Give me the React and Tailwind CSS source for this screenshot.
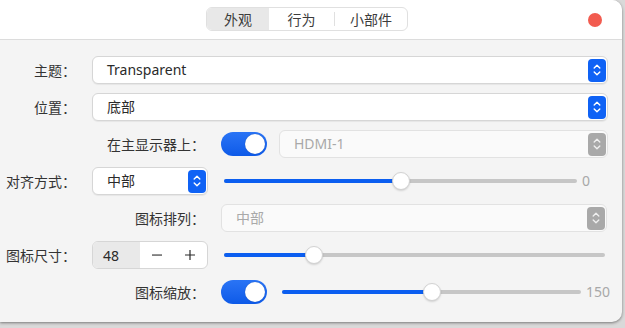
import React from 'react';

const FONT = { fontFamily: '"Noto Sans", "Noto Sans CJK SC", sans-serif' };

function Chevrons({ className }) {
  return (
    <svg width="10" height="16" viewBox="0 0 10 16" className={className} fill="none" stroke="currentColor" strokeWidth="1.4" strokeLinecap="round" strokeLinejoin="round">
      <path d="M2.2 6 L5 3.2 L7.8 6" />
      <path d="M2.2 10 L5 12.8 L7.8 10" />
    </svg>
  );
}

function Combo({ text, width, disabled }) {
  return (
    <div
      className={`h-[28px] flex items-center rounded-[6px] border ${
        disabled ? 'bg-[#fafafa] border-[#e2e2e2] text-[#a9a9a9]' : 'bg-white border-[#d6d6d6] text-[#2a2a2a] shadow-[0_1px_1px_rgba(0,0,0,0.06)]'
      } ${width}`}
    >
      <span className="pl-[14px] text-[14px] leading-none flex-1">{text}</span>
      <div
        className={`w-[18px] h-[23px] mr-[1px] rounded-[4px] flex items-center justify-center ${
          disabled ? 'bg-[#a9a9a9] text-[#eeeeee]' : 'bg-[#0f62f5] text-white'
        }`}
      >
        <Chevrons />
      </div>
    </div>
  );
}

function Toggle() {
  return (
    <div className="w-[46px] h-[24px] rounded-full bg-gradient-to-b from-[#2a74f5] to-[#0d5ae8] flex items-center justify-end pr-[2px]">
      <div className="w-[20px] h-[20px] rounded-full bg-white shadow-[0_0_1px_rgba(0,0,0,0.3)]" />
    </div>
  );
}

function Slider({ width, fraction, value }) {
  const pos = Math.round(width * fraction);
  return (
    <div className="flex items-center">
      <div className="relative h-[18px] flex items-center" style={{ width }}>
        <div className="absolute left-0 right-0 h-[4px] rounded-full bg-[#c6c6c6]" />
        <div className="absolute left-0 h-[4px] rounded-full bg-[#0b5ef0]" style={{ width: pos }} />
        <div
          className="absolute w-[18px] h-[18px] rounded-full bg-white border border-[#d2d2d2] shadow-[0_1px_2px_rgba(0,0,0,0.15)]"
          style={{ left: pos - 9 }}
        />
      </div>
      {value !== undefined && <span className="ml-[5px] text-[14px] text-[#a8a8a8] leading-none">{value}</span>}
    </div>
  );
}

function Row({ labelWidth, label, children }) {
  return (
    <div className="h-[28px] flex items-center">
      <div className="text-right text-[14px] text-[#333333] shrink-0" style={{ width: labelWidth }}>
        {label}
      </div>
      <div className="ml-[16px] flex items-center">{children}</div>
    </div>
  );
}

export default function App() {
  return (
    <div className="w-[625px] h-[328px] bg-[#d9d9d9] overflow-hidden" style={FONT}>
      <div className="w-[622px] h-[322px] bg-[#f4f4f4] rounded-tr-[10px] rounded-br-[10px] shadow-[0_1px_3px_rgba(0,0,0,0.45)] overflow-hidden flex flex-col">
        <div className="h-[40px] bg-white border-b border-[#dcdcdc] flex items-center shrink-0">
          <div className="ml-[206px] mt-[-1px] h-[24px] flex items-center rounded-[6px] border border-[#e0e0e0] bg-white text-[14px] text-[#3c3c3c]">
            <div className="w-[62px] h-full rounded-l-[5px] bg-[#e8e8e8] flex items-center justify-center">外观</div>
            <div className="w-[65px] h-full flex items-center justify-center">行为</div>
            <div className="w-[1px] h-[14px] bg-[#e0e0e0]" />
            <div className="w-[72px] h-full flex items-center justify-center">小部件</div>
          </div>
          <div className="ml-auto mr-[20px] w-[14px] h-[14px] rounded-full bg-[#f25b4f]" />
        </div>

        <div className="pt-[16px] flex flex-col gap-[9px] pr-[14px]">
          <Row labelWidth={76} label="主题：">
            <Combo text="Transparent" width="w-[516px]" />
          </Row>
          <Row labelWidth={76} label="位置：">
            <Combo text="底部" width="w-[516px]" />
          </Row>
          <Row labelWidth={205} label="在主显示器上：">
            <Toggle />
            <div className="ml-[12px]">
              <Combo text="HDMI-1" width="w-[329px]" disabled />
            </div>
          </Row>
          <Row labelWidth={76} label="对齐方式：">
            <Combo text="中部" width="w-[116px]" />
            <div className="ml-[16px]">
              <Slider width={353} fraction={0.5} value="0" />
            </div>
          </Row>
          <Row labelWidth={205} label="图标排列：">
            <Combo text="中部" width="w-[386px]" disabled />
          </Row>
          <Row labelWidth={76} label="图标尺寸：">
            <div className="w-[116px] h-[28px] flex rounded-[6px] border border-[#d6d6d6] overflow-hidden bg-white">
              <div className="w-[47px] bg-[#e9e9e9] flex items-center pl-[10px] text-[14px] text-[#2a2a2a]">48</div>
              <div className="flex-1 flex items-center justify-around text-[#2a2a2a]">
                <svg width="12" height="12" viewBox="0 0 12 12" stroke="currentColor" strokeWidth="1.2">
                  <path d="M1 6 H11" />
                </svg>
                <svg width="12" height="12" viewBox="0 0 12 12" stroke="currentColor" strokeWidth="1.2">
                  <path d="M1 6 H11 M6 1 V11" />
                </svg>
              </div>
            </div>
            <div className="ml-[16px]">
              <Slider width={381} fraction={0.236} />
            </div>
          </Row>
          <Row labelWidth={205} label="图标缩放：">
            <Toggle />
            <div className="ml-[15px]">
              <Slider width={299} fraction={0.5} value="150" />
            </div>
          </Row>
        </div>
      </div>
    </div>
  );
}
